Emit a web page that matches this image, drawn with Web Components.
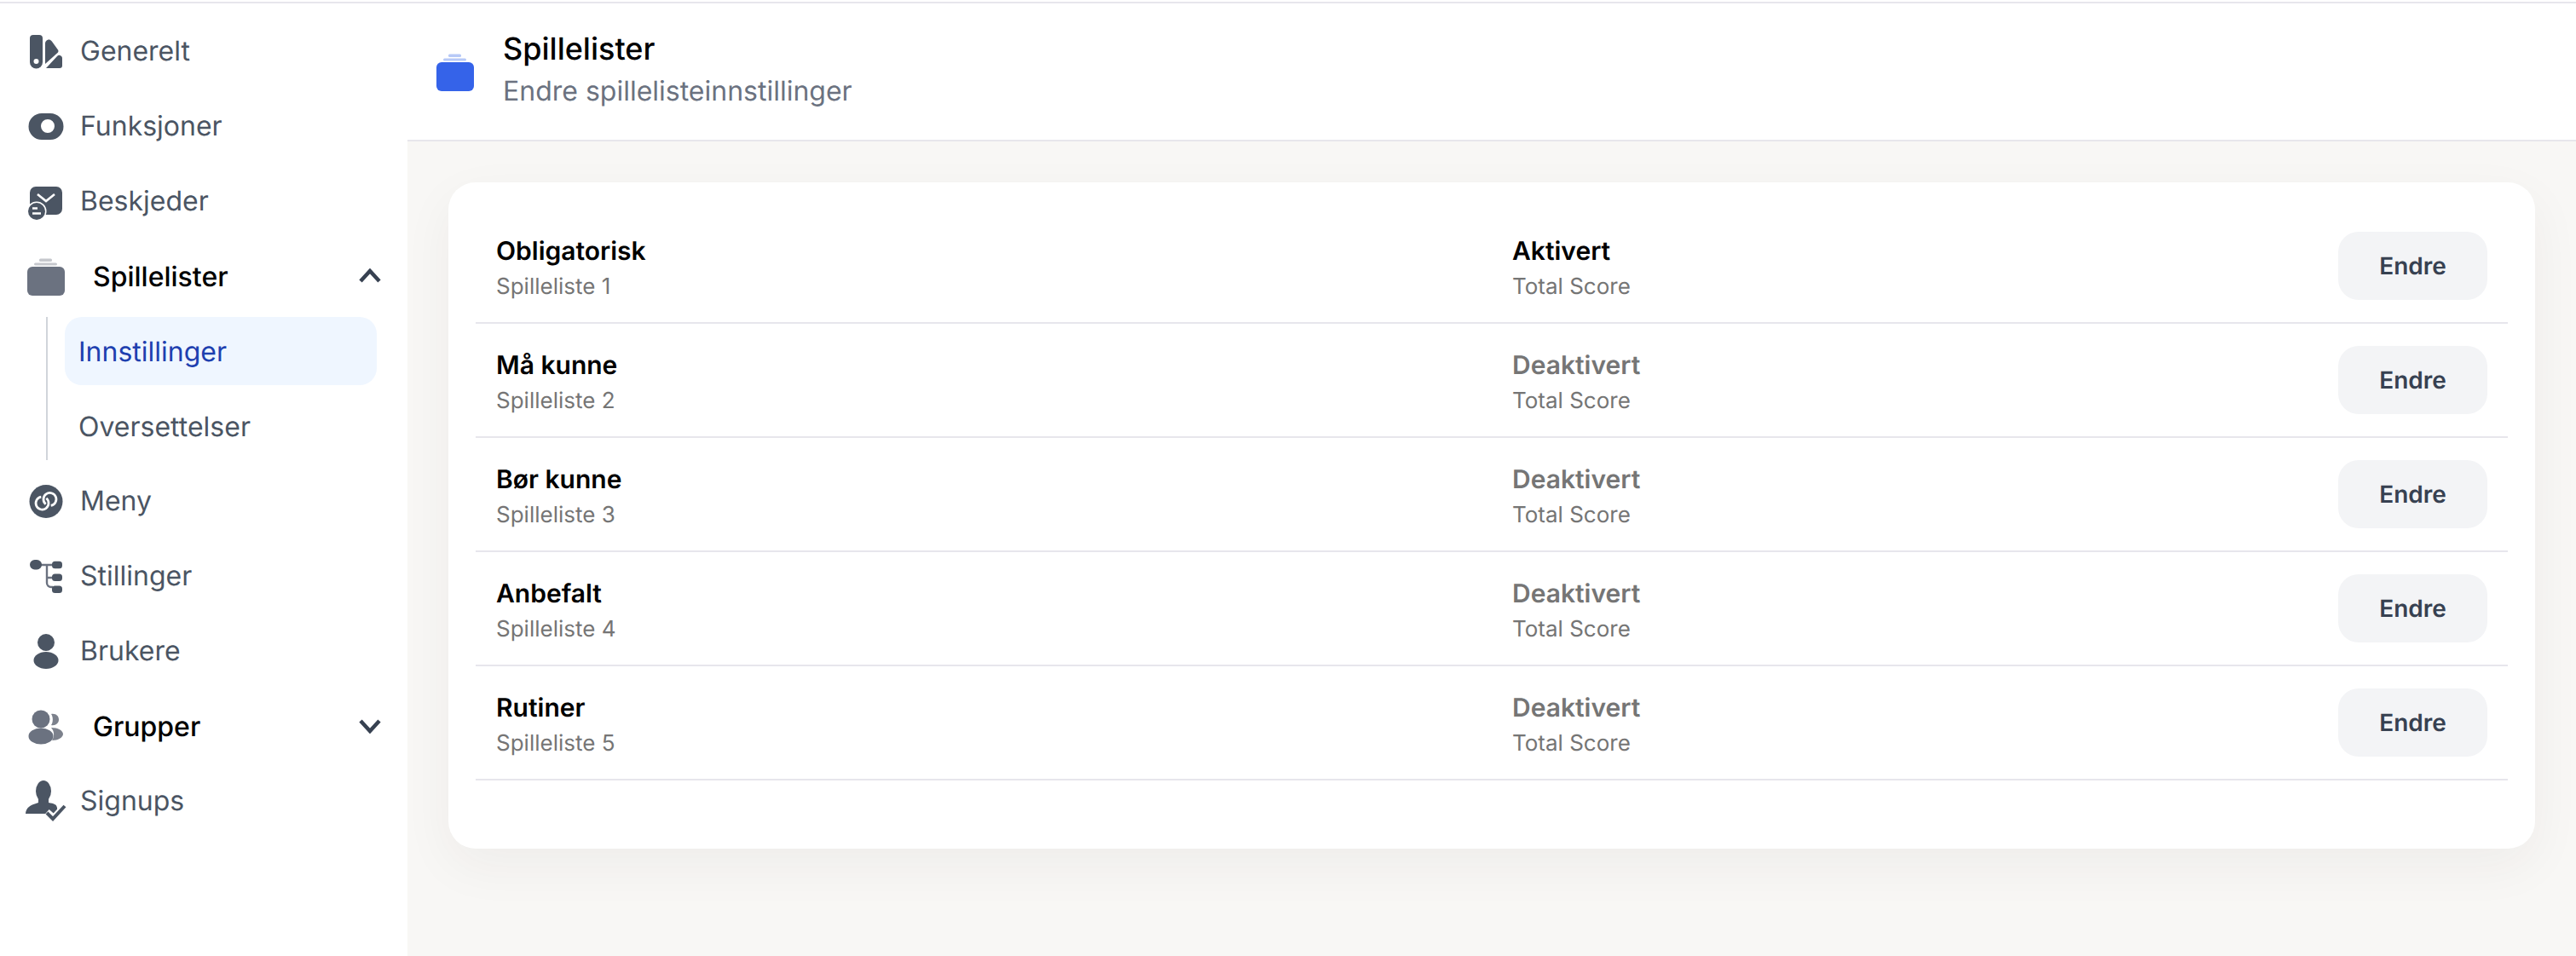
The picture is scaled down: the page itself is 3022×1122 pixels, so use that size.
<!DOCTYPE html>
<html lang="no">
<head>
<meta charset="utf-8">
<title>Spillelister</title>
<style>
    html, body { margin: 0; padding: 0; background: #fff; }
    body { font-family: Inter, "Liberation Sans", sans-serif; overflow: hidden; text-rendering: geometricPrecision; }
</style>
</head>
<body>
<app-shell>
    <side-nav slot="nav">
        <nav-item icon="swatch">Generelt</nav-item>
        <nav-item icon="toggle">Funksjoner</nav-item>
        <nav-item icon="mail">Beskjeder</nav-item>
        <nav-group icon="stack" label="Spillelister" open>
            <sub-item active>Innstillinger</sub-item>
            <sub-item>Oversettelser</sub-item>
        </nav-group>
        <nav-item icon="link">Meny</nav-item>
        <nav-item icon="tree">Stillinger</nav-item>
        <nav-item icon="user">Brukere</nav-item>
        <nav-group icon="users" label="Grupper"></nav-group>
        <nav-item icon="signup">Signups</nav-item>
    </side-nav>
    <page-header slot="head" title="Spillelister" subtitle="Endre spillelisteinnstillinger"></page-header>
    <list-card>
        <list-row name="Obligatorisk" list="Spilleliste 1" status="Aktivert" active></list-row>
        <list-row name="Må kunne" list="Spilleliste 2" status="Deaktivert"></list-row>
        <list-row name="Bør kunne" list="Spilleliste 3" status="Deaktivert"></list-row>
        <list-row name="Anbefalt" list="Spilleliste 4" status="Deaktivert"></list-row>
        <list-row name="Rutiner" list="Spilleliste 5" status="Deaktivert"></list-row>
    </list-card>
</app-shell>
<script>
const stackIcon = (body, light) => `
    <rect x="2" y="13" width="44" height="34" rx="6" fill="${body}"/>
    <rect x="10" y="8.500" width="27" height="3" rx="1.500" fill="${light}"/>
    <rect x="16" y="3.500" width="15" height="3.500" rx="1.500" fill="${light}"/>`;

const ICONS = {
    swatch: `
        <path fill="#4b5563" d="M9 5h7a4 4 0 0 1 4 4v28a7.500 7.500 0 0 1-15 0V9a4 4 0 0 1 4-4z"/>
        <circle cx="12.500" cy="36" r="3" fill="#fff"/>
        <path fill="#4b5563" d="M23 15c0-2.500 3-5.500 6-4 .8.4 1.400 1 2 1.800l7 9.700c.8 1.200.6 2.500-.5 3.500L23 39z"/>
        <path fill="#4b5563" d="M24 44l13.500-14.500c.8-.8 1.800-1 2.800-.5l1 .5c1.200.6 1.700 1.600 1.700 3V41a3 3 0 0 1-3 3z"/>`,
    toggle: `
        <path fill="#4b5563" fill-rule="evenodd" d="M19 9h10a15.500 15.500 0 0 1 0 31H19A15.500 15.500 0 0 1 19 9zm7 7a8 8 0 1 0 0 16 8 8 0 0 0 0-16z"/>`,
    mail: `
        <rect x="5" y="7" width="38" height="33" rx="7" fill="#4b5563"/>
        <path d="M14 16l10 8 10-8" fill="none" stroke="#fff" stroke-width="2.600"/>
        <circle cx="13" cy="36" r="11.500" fill="#fff"/>
        <circle cx="13" cy="36" r="10" fill="#4b5563"/>
        <path d="M8 32.500h6M8 38.500h10" stroke="#fff" stroke-width="2.400" fill="none"/>`,
    stack: stackIcon("#6b7280", "#c6c8cd"),
    link: `
        <circle cx="24" cy="24.500" r="19.500" fill="#4b5563"/>
        <g fill="none" stroke="#fff" stroke-width="2.700">
            <path d="M24.400 20.800A7.500 7.500 0 1 1 18.300 19.100"/>
            <path d="M23.600 27.700A7.500 7.500 0 1 1 29.700 29.400"/>
        </g>`,
    tree: `
        <path d="M16 11h16M25 11v21a5 5 0 0 0 5 5h2M25 26h7" fill="none" stroke="#6b7280" stroke-width="2.400"/>
        <rect x="5" y="5" width="14" height="11.500" rx="5.700" fill="#4b5563"/>
        <rect x="31" y="6.800" width="12" height="8.500" rx="3.500" fill="#4b5563"/>
        <rect x="31" y="21.500" width="12" height="8.500" rx="3.500" fill="#4b5563"/>
        <rect x="31" y="35.500" width="12" height="8.500" rx="3.500" fill="#4b5563"/>`,
    user: `
        <circle cx="24" cy="14" r="10" fill="#4b5563"/>
        <ellipse cx="24" cy="35" rx="14.500" ry="10" fill="#4b5563"/>`,
    users: `
        <path d="M30 10c5-1 9 2 9 6.500s-4 7.500-9 6.500c2.500-3 2.500-10 0-13z" fill="#7c818c"/>
        <path d="M30 26c8 0 14 3.500 14 7.500s-6 7.500-13 7.500c3-4 3-11-1-15z" fill="#7c818c"/>
        <circle cx="18" cy="16" r="10.500" fill="#6b7280"/>
        <ellipse cx="18" cy="36" rx="14.500" ry="9.500" fill="#6b7280"/>`,
    signup: `
        <ellipse cx="21" cy="12.500" rx="9" ry="12.500" fill="#4b5563"/>
        <path fill="#4b5563" d="M15 20h12v6c6 1 9.500 2 10 6l.5 7H0c.5-7 5-10 15-13z"/>
        <path d="M25 37l8 7 14-15" fill="none" stroke="#fff" stroke-width="8"/>
        <path d="M25 38l7 7 14-15" fill="none" stroke="#4b5563" stroke-width="4"/>`
};

class AppShell extends HTMLElement {
    constructor() {
        super();
        this.attachShadow({mode: "open"}).innerHTML = `
            <style>
                :host {
                    display: grid;
                    grid-template-columns: 478px 1fr;
                    grid-template-rows: 2px 1fr;
                    height: 1122px;
                    box-sizing: border-box;
                    padding-top: 2px;
                }
                .rule { grid-column: 1 / 3; height: 2px; background: #e7e6ec; }
                main { background: #f8f7f5; display: flex; flex-direction: column; min-height: 0; }
                .content { padding: 48px; }
            </style>
            <div class="rule"></div>
            <slot name="nav"></slot>
            <main>
                <slot name="head"></slot>
                <div class="content"><slot></slot></div>
            </main>
        `;
    }
}

class SideNav extends HTMLElement {
    constructor() {
        super();
        this.attachShadow({mode: "open"}).innerHTML = `
            <style>
                :host {
                    display: flex;
                    flex-direction: column;
                    gap: 8px;
                    padding: 16px 0 0;
                    background: #fff;
                }
            </style>
            <slot></slot>
        `;
    }
}

class NavItem extends HTMLElement {
    constructor() {
        super();
        this.attachShadow({mode: "open"}).innerHTML = `
            <style>
                :host {
                    display: flex;
                    align-items: center;
                    gap: 16px;
                    height: 80px;
                    padding-left: 30px;
                    font-size: 32px;
                    color: #4b5563;
                }
                svg { width: 48px; height: 48px; flex: none; overflow: visible; }
                span { margin-bottom: 2px; }
            </style>
            <svg viewBox="0 0 48 48">${ICONS[this.getAttribute("icon")]}</svg>
            <span><slot></slot></span>
        `;
    }
}

class NavGroup extends HTMLElement {
    constructor() {
        super();
        const open = this.hasAttribute("open");
        const chevron = open ? "M3 15L14 3l11 12" : "M3 3l11 12L25 3";
        this.attachShadow({mode: "open"}).innerHTML = `
            <style>
                :host { display: flex; flex-direction: column; gap: 8px; }
                .head {
                    display: flex;
                    align-items: center;
                    height: 80px;
                    padding-left: 30px;
                    font-size: 32px;
                    font-weight: 500;
                    color: #000;
                }
                .icon { width: 48px; height: 48px; flex: none; }
                .label { margin-left: 31px; flex: 1; }
                .chevron { width: 28px; height: 18px; margin-right: 30px; }
                .subs {
                    display: flex;
                    flex-direction: column;
                    gap: 8px;
                    margin-left: 54px;
                    padding-left: 20px;
                    margin-right: 36px;
                    border-left: 2px solid #d1d5db;
                }
            </style>
            <div class="head">
                <svg class="icon" viewBox="0 0 48 48">${ICONS[this.getAttribute("icon")]}</svg>
                <span class="label">${this.getAttribute("label")}</span>
                <svg class="chevron" viewBox="0 0 28 18"><path d="${chevron}" fill="none" stroke="#374151" stroke-width="4.500"/></svg>
            </div>
            ${open ? '<div class="subs"><slot></slot></div>' : ""}
        `;
    }
}

class SubItem extends HTMLElement {
    constructor() {
        super();
        this.attachShadow({mode: "open"}).innerHTML = `
            <style>
                :host {
                    display: flex;
                    align-items: center;
                    height: 80px;
                    padding-left: 16px;
                    border-radius: 20px;
                    font-size: 32px;
                    color: #4b5563;
                }
                :host([active]) { background: #eff6ff; color: #1e40af; }
            </style>
            <slot></slot>
        `;
    }
}

class PageHeader extends HTMLElement {
    constructor() {
        super();
        this.attachShadow({mode: "open"}).innerHTML = `
            <style>
                :host {
                    display: flex;
                    align-items: center;
                    height: 160px;
                    padding-left: 32px;
                    gap: 32px;
                    background: #fff;
                    border-bottom: 2px solid #e7e6ec;
                }
                svg { width: 48px; height: 48px; flex: none; }
                .text { margin-top: -4px; }
                h1 { margin: 0; font-size: 36px; line-height: 50px; font-weight: 500; color: #000; }
                p { margin: 0; font-size: 32px; line-height: 50px; color: #6b7280; }
            </style>
            <svg viewBox="0 0 48 48">${stackIcon("#3563e9", "#b7c9f7")}</svg>
            <div class="text">
                <h1>${this.getAttribute("title")}</h1>
                <p>${this.getAttribute("subtitle")}</p>
            </div>
        `;
    }
}

class ListCard extends HTMLElement {
    constructor() {
        super();
        this.attachShadow({mode: "open"}).innerHTML = `
            <style>
                :host {
                    display: block;
                    padding: 32px 32px 80px;
                    background: #fff;
                    border-radius: 32px;
                    box-shadow: 0 20px 60px rgba(60, 40, 30, 0.05);
                }
            </style>
            <slot></slot>
        `;
    }
}

class EditButton extends HTMLElement {
    constructor() {
        super();
        this.attachShadow({mode: "open"}).innerHTML = `
            <style>
                :host {
                    display: flex;
                    align-items: center;
                    justify-content: center;
                    width: 175px;
                    height: 80px;
                    border-radius: 24px;
                    background: #f3f4f6;
                    color: #374151;
                    font-size: 28px;
                    font-weight: 600;
                }
            </style>
            <slot></slot>
        `;
    }
}

class ListRow extends HTMLElement {
    constructor() {
        super();
        this.attachShadow({mode: "open"}).innerHTML = `
            <style>
                :host {
                    display: grid;
                    grid-template-columns: 1fr 1fr;
                    height: 132px;
                    align-items: center;
                    border-bottom: 2px solid #e7e6ec;
                }
                .cell { padding: 0 24px; }
                .end { display: flex; justify-content: space-between; align-items: center; }
                .text { padding-top: 5px; }
                .main { font-size: 30px; line-height: 42px; font-weight: 600; color: #000; }
                .end .main { color: #757575; }
                :host([active]) .end .main { color: #000; }
                .sub { margin-top: 3px; font-size: 26px; line-height: 36px; color: #757575; }
            </style>
            <div class="cell text">
                <div class="main">${this.getAttribute("name")}</div>
                <div class="sub">${this.getAttribute("list")}</div>
            </div>
            <div class="cell end">
                <div class="text">
                    <div class="main">${this.getAttribute("status")}</div>
                    <div class="sub">Total Score</div>
                </div>
                <edit-button>Endre</edit-button>
            </div>
        `;
    }
}

customElements.define("edit-button", EditButton);
customElements.define("list-row", ListRow);
customElements.define("list-card", ListCard);
customElements.define("page-header", PageHeader);
customElements.define("sub-item", SubItem);
customElements.define("nav-group", NavGroup);
customElements.define("nav-item", NavItem);
customElements.define("side-nav", SideNav);
customElements.define("app-shell", AppShell);
</script>
</body>
</html>
